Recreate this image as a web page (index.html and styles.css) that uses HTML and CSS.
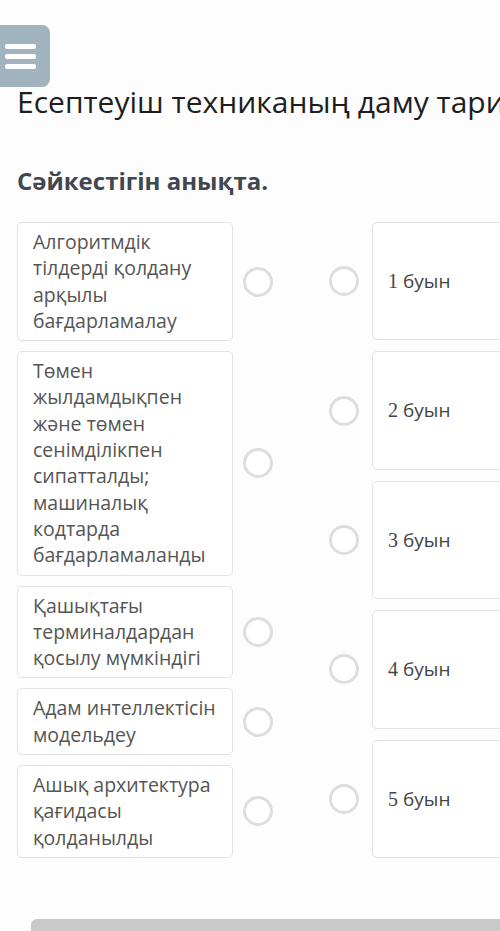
FILE: index.html
```html
<!DOCTYPE html>
<html lang="kk">
<head>
<meta charset="utf-8">
<title>Сәйкестігін анықта</title>
<link rel="stylesheet" href="styles.css">
</head>
<body>
<div class="page">
  <button class="menu-btn" aria-label="Мәзір">
    <span class="bar"></span><span class="bar"></span><span class="bar"></span>
  </button>
  <h1 class="title">Есептеуіш техниканың даму тарихы</h1>
  <h2 class="task">Сәйкестігін анықта.</h2>
  <div class="match">
    <div class="col-left">
      <div class="row-left"><div class="card">Алгоритмдік тілдерді қолдану арқылы бағдарламалау</div><span class="radio"></span></div>
      <div class="row-left"><div class="card">Төмен жылдамдықпен және төмен сенімділікпен сипатталды; машиналық кодтарда бағдарламаланды</div><span class="radio"></span></div>
      <div class="row-left"><div class="card">Қашықтағы терминалдардан қосылу мүмкіндігі</div><span class="radio"></span></div>
      <div class="row-left"><div class="card">Адам интеллектісін модельдеу</div><span class="radio"></span></div>
      <div class="row-left"><div class="card">Ашық архитектура қағидасы қолданылды</div><span class="radio"></span></div>
    </div>
    <div class="col-right">
      <div class="row-right"><span class="radio"></span><div class="card card-r"><span class="num">1</span> буын</div></div>
      <div class="row-right"><span class="radio"></span><div class="card card-r"><span class="num">2</span> буын</div></div>
      <div class="row-right"><span class="radio"></span><div class="card card-r"><span class="num">3</span> буын</div></div>
      <div class="row-right"><span class="radio"></span><div class="card card-r"><span class="num">4</span> буын</div></div>
      <div class="row-right"><span class="radio"></span><div class="card card-r"><span class="num">5</span> буын</div></div>
    </div>
  </div>
  <div class="bottom-bar"></div>
</div>
</body>
</html>
```
FILE: styles.css
```css
html, body {
  margin: 0;
  padding: 0;
  background: #fdfdfd;
}
.page {
  width: 500px;
  height: 931px;
  overflow: hidden;
  font-family: "Open Sans", "Noto Sans", sans-serif;
}
.menu-btn {
  display: flex;
  flex-direction: column;
  justify-content: center;
  gap: 5px;
  margin: 25px 0 0 0;
  padding: 0 0 0 5px;
  width: 50px;
  height: 62px;
  border: none;
  border-radius: 0 8px 8px 0;
  background: #a2b3c0;
}
.bar {
  display: block;
  width: 31px;
  height: 5px;
  border-radius: 2px;
  background: #fff;
}
.title {
  margin: 0 0 0 17px;
  font-size: 30px;
  line-height: 30px;
  font-weight: 400;
  color: #1e1e1e;
  white-space: nowrap;
}
.task {
  margin: 49px 0 0 17px;
  font-size: 24px;
  line-height: 30px;
  font-weight: 700;
  color: #40474e;
}
.match {
  display: flex;
  align-items: stretch;
  margin: 26px 0 0 17px;
}
.col-left {
  display: flex;
  flex-direction: column;
  gap: 10px;
}
.col-right {
  display: flex;
  flex-direction: column;
  gap: 11px;
  margin-left: 56px;
}
.row-left {
  display: flex;
  align-items: center;
  gap: 10px;
}
.row-right {
  flex: 1;
  display: flex;
  align-items: center;
  gap: 13px;
}
.card {
  box-sizing: border-box;
  width: 216px;
  padding: 6px 8px 6px 15px;
  border: 1px solid #e3e3e3;
  border-radius: 5px;
  background: #fff;
  font-size: 19.5px;
  line-height: 26.3px;
  color: #555;
}
.card-r {
  align-self: stretch;
  display: flex;
  align-items: center;
  color: #444;
  font-size: 19px;
}
.num {
  font-family: "Liberation Serif", serif;
  font-size: 20px;
  margin-right: 5px;
}
.radio {
  flex: none;
  box-sizing: border-box;
  width: 30px;
  height: 30px;
  border: 3px solid #dedede;
  border-radius: 50%;
  background: #fff;
}
.bottom-bar {
  margin: 61px 0 0 31px;
  height: 40px;
  border-radius: 6px 0 0 0;
  background: #c9c9c9;
}
```
